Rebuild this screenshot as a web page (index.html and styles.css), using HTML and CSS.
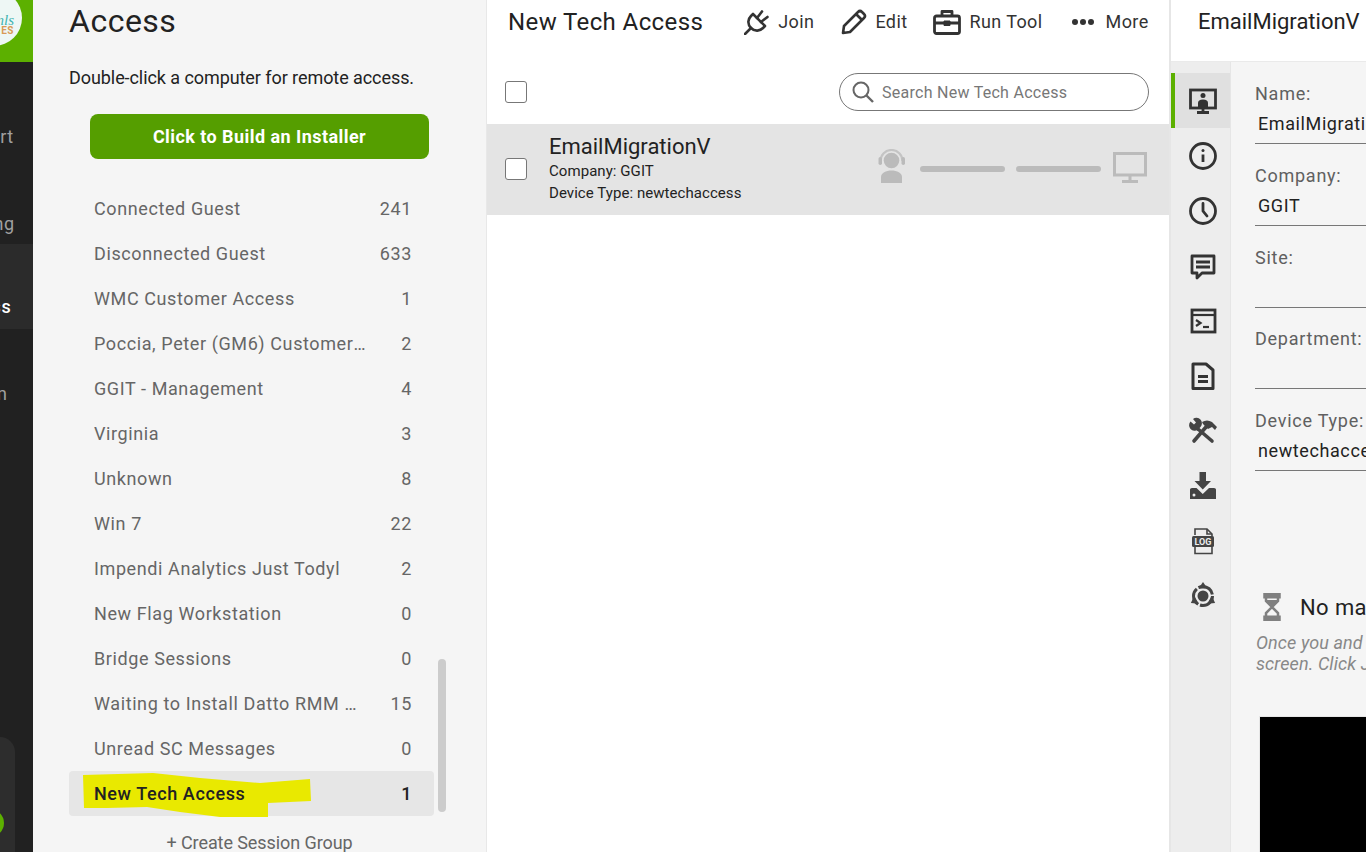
FILE: index.html
```html
<!DOCTYPE html>
<html lang="en">
<head>
<meta charset="utf-8">
<title>New Tech Access</title>
<link rel="stylesheet" href="styles.css">
</head>
<body>
<div class="app">
  <nav class="rail">
    <div class="logo"><div class="logo-disc"><span class="logo-a">nls</span><span class="logo-b">ES</span></div></div>
    <div class="rail-nav">
      <div class="rail-item"><span>Support</span></div>
      <div class="rail-item"><span>Meeting</span></div>
      <div class="rail-item active"><span>Access</span></div>
      <div class="rail-item"><span>Admin</span></div>
    </div>
    <div class="rail-pill"><span class="rail-dot"></span></div>
  </nav>

  <aside class="groups">
    <h1 class="groups-title">Access</h1>
    <p class="groups-intro">Double-click a computer for remote access.</p>
    <button class="build-btn">Click to Build an Installer</button>
    <ul class="group-list">
      <li class="group-row"><span class="group-name">Connected Guest</span><span class="group-count">241</span></li>
      <li class="group-row"><span class="group-name">Disconnected Guest</span><span class="group-count">633</span></li>
      <li class="group-row"><span class="group-name">WMC Customer Access</span><span class="group-count">1</span></li>
      <li class="group-row"><span class="group-name">Poccia, Peter (GM6) Customer Access</span><span class="group-count">2</span></li>
      <li class="group-row"><span class="group-name">GGIT - Management</span><span class="group-count">4</span></li>
      <li class="group-row"><span class="group-name">Virginia</span><span class="group-count">3</span></li>
      <li class="group-row"><span class="group-name">Unknown</span><span class="group-count">8</span></li>
      <li class="group-row"><span class="group-name">Win 7</span><span class="group-count">22</span></li>
      <li class="group-row"><span class="group-name">Impendi Analytics Just Todyl</span><span class="group-count">2</span></li>
      <li class="group-row"><span class="group-name">New Flag Workstation</span><span class="group-count">0</span></li>
      <li class="group-row"><span class="group-name">Bridge Sessions</span><span class="group-count">0</span></li>
      <li class="group-row"><span class="group-name">Waiting to Install Datto RMM Agent</span><span class="group-count">15</span></li>
      <li class="group-row"><span class="group-name">Unread SC Messages</span><span class="group-count">0</span></li>
      <li class="group-row selected">
        <svg class="marker" viewBox="0 0 228 46" width="228" height="46"><polygon fill="#e9e900" points="0,4 70,2 117,7 177,12 227,8 228,30 185,32 185,46 137,46 97,41 64,36 24,37 1,37"/></svg>
        <span class="group-name">New Tech Access</span><span class="group-count">1</span>
      </li>
    </ul>
    <div class="create-group">+ Create Session Group</div>
    <div class="scrollbar"></div>
  </aside>

  <main class="sessions">
    <header class="sessions-head">
      <h2 class="sessions-title">New Tech Access</h2>
      <div class="actions">
        <div class="action action-join">
          <svg width="26" height="26" viewBox="0 0 26 26" fill="none" stroke="#333" stroke-width="2.600" stroke-linecap="round" stroke-linejoin="round"><path d="M7 19C3 15 4 10 7 7L9 5L21 17L19 19C16 22 11 23 7 19Z"/><path d="M13 9L18 2.500M17 13L23.500 8M7 19L1 25"/></svg>
          <span>Join</span>
        </div>
        <div class="action action-edit">
          <svg width="26" height="26" viewBox="0 0 26 26" fill="none" stroke="#333" stroke-width="2.600" stroke-linejoin="round"><path d="M2 24L3 17L17 3Q19 1 21 3L23 5Q25 7 23 9L9 23Z"/><path d="M15 5L21 11"/></svg>
          <span>Edit</span>
        </div>
        <div class="action action-tool">
          <svg width="28" height="26" viewBox="0 0 28 26" fill="none" stroke="#333" stroke-width="2.800" stroke-linejoin="round"><rect x="1.500" y="7" width="25" height="17.500" rx="2"/><path d="M9 7V2.500H19V7M1.500 14H11M17 14H26.500"/><rect x="11" y="12" width="6" height="4.500" fill="#333" stroke-width="1"/></svg>
          <span>Run Tool</span>
        </div>
        <div class="action action-more">
          <svg width="24" height="8" viewBox="0 0 24 8" fill="#333"><circle cx="4" cy="4" r="3"/><circle cx="12" cy="4" r="3"/><circle cx="20" cy="4" r="3"/></svg>
          <span>More</span>
        </div>
      </div>
    </header>
    <div class="toolbar">
      <span class="checkbox"></span>
      <div class="search">
        <svg width="24" height="24" viewBox="0 0 24 24" fill="none" stroke="#666" stroke-width="2"><circle cx="10" cy="10" r="7.500"/><path d="M15.500 15.500L22 22" stroke-width="2.400"/></svg>
        <span>Search New Tech Access</span>
      </div>
    </div>
    <div class="session-row">
      <span class="checkbox"></span>
      <div class="session-info">
        <div class="session-name">EmailMigrationV</div>
        <div class="session-meta">Company: GGIT</div>
        <div class="session-meta">Device Type: newtechaccess</div>
      </div>
      <div class="session-status">
        <svg class="status-agent" width="28" height="34" viewBox="0 0 28 34" fill="#bbb"><circle cx="13.500" cy="11.500" r="7.800"/><path d="M2.500 12a11 11 0 0 1 22 0" fill="none" stroke="#c4c4c4" stroke-width="2.200"/><rect x="0.500" y="8" width="3.500" height="8" rx="1.750"/><rect x="23.500" y="8" width="3.500" height="8" rx="1.750"/><path d="M3 34V28C3 24 8 21.500 13.500 21.500S24 24 24 28V34Z"/></svg>
        <span class="status-bar"></span>
        <span class="status-bar"></span>
        <svg class="status-monitor" width="34" height="31" viewBox="0 0 34 31" fill="none" stroke="#bbb" stroke-width="3"><rect x="1.500" y="1.500" width="31" height="21.500"/><path d="M17 23V29" stroke-width="3"/><path d="M9 29.500H25" stroke-width="3"/></svg>
      </div>
    </div>
  </main>

  <section class="details">
    <header class="details-head">EmailMigrationV</header>
    <div class="details-body">
      <div class="tabs">
        <div class="tab active"><svg width="30" height="30" viewBox="0 0 30 30" fill="none" stroke="#333" stroke-width="2.800"><rect x="2.500" y="4" width="25" height="18"/><path d="M15 22V26M9 26.500H21"/><circle cx="15" cy="9.500" r="2.500" fill="#333" stroke="none"/><path d="M10 21V17Q10 13.500 15 13.500T20 17V21Z" fill="#333" stroke="none"/></svg></div>
        <div class="tab"><svg width="30" height="30" viewBox="0 0 30 30" fill="none" stroke="#333" stroke-width="2.800"><circle cx="15" cy="15" r="12.500"/><path d="M15 13.500V21"/><circle cx="15" cy="9.500" r="1.500" fill="#333" stroke="none"/></svg></div>
        <div class="tab"><svg width="30" height="30" viewBox="0 0 30 30" fill="none" stroke="#333" stroke-width="2.800"><circle cx="15" cy="15" r="12.500"/><path d="M15 7.500V15L19 20" stroke-linecap="round"/></svg></div>
        <div class="tab"><svg width="30" height="30" viewBox="0 0 30 30" fill="none" stroke="#333" stroke-width="2.800"><path d="M4 5H26V22H14L9 27V22H4Z" stroke-linejoin="round"/><path d="M8 11H22M8 16H22"/></svg></div>
        <div class="tab"><svg width="30" height="30" viewBox="0 0 30 30" fill="none" stroke="#333" stroke-width="2.800"><rect x="4" y="4" width="23" height="22"/><path d="M4 9H27" stroke-width="2.200"/><path d="M8 14L12.500 17L8 20" stroke-width="2.200"/><path d="M15 21H21" stroke-width="2.200"/></svg></div>
        <div class="tab"><svg width="30" height="30" viewBox="0 0 30 30" fill="none" stroke="#333" stroke-width="3" stroke-linejoin="round"><path d="M5 3H18L25 9V27.500H5Z"/><path d="M10 15.500H20M10 20.500H20"/></svg></div>
        <div class="tab"><svg width="30" height="30" viewBox="0 0 30 30" fill="#444" stroke="#444"><path d="M6 25L18 11" stroke-width="3.600" stroke-linecap="round"/><path d="M14 6Q19 3 24 6L29 11L27 14L24 11L20 13L15 8Z" stroke="none"/><path d="M10 13L24 25" stroke-width="3.600" stroke-linecap="round"/><path d="M5 3L8 6.500L6 8.500L2.500 5.500A5.500 5.500 0 0 0 10 13.500L12.500 11A5.500 5.500 0 0 0 5 3Z" stroke="none"/></svg></div>
        <div class="tab"><svg width="30" height="30" viewBox="0 0 30 30" fill="#444"><path d="M11.500 1H18V10H23L14.750 18.500L6.500 10H11.500Z"/><path d="M2 18.500Q2 17 4 17H8.500L14.750 23L21 17H26Q28 17 28 18.500V28H2Z"/><circle cx="6" cy="24" r="1.500" fill="#eee"/></svg></div>
        <div class="tab"><svg width="30" height="30" viewBox="0 0 30 30" fill="none" stroke="#444" stroke-width="1.600"><path d="M7 9V3H19L24 8V10M7 21V27.500H24V21"/><path d="M19 3V8H24"/><rect x="4" y="10" width="22" height="11" rx="1.500" fill="#444" stroke="none"/><text class="log-text" x="15" y="19" text-anchor="middle">LOG</text></svg></div>
        <div class="tab"><svg width="30" height="30" viewBox="0 0 30 30" fill="none" stroke="#444" stroke-width="3"><circle cx="15" cy="15" r="5.500" fill="#444" stroke="none"/><circle cx="15" cy="15" r="9.500" stroke-dasharray="17.900 2"/><polygon points="15,1 19.500,7.500 10.500,7.500" fill="#444" stroke="none"/><polygon points="15,1 19.500,7.500 10.500,7.500" fill="#444" stroke="none" transform="rotate(120 15 15)"/><polygon points="15,1 19.500,7.500 10.500,7.500" fill="#444" stroke="none" transform="rotate(240 15 15)"/></svg></div>
      </div>
      <div class="info">
        <div class="field"><div class="field-label">Name:</div><div class="field-value">EmailMigrationV</div></div>
        <div class="field"><div class="field-label">Company:</div><div class="field-value">GGIT</div></div>
        <div class="field"><div class="field-label">Site:</div><div class="field-value"></div></div>
        <div class="field"><div class="field-label">Department:</div><div class="field-value"></div></div>
        <div class="field"><div class="field-label">Device Type:</div><div class="field-value">newtechaccess</div></div>
        <div class="no-machine">
          <svg width="18" height="28" viewBox="0 0 18 28" fill="none" stroke="#808080" stroke-width="2.500"><rect x="1.500" y="1.250" width="15" height="3" fill="#808080"/><rect x="1.500" y="23.750" width="15" height="3" fill="#808080"/><path d="M3 4V8L9 14L15 8V4M3 24V20L9 14L15 20V24"/><path d="M4 7H14V8L9 13L4 8Z" fill="#808080" stroke="none"/></svg>
          <span>No machine</span>
        </div>
        <p class="hint">Once you and the<br>screen. Click Join</p>
        <div class="thumb"></div>
      </div>
    </div>
  </section>
</div>
</body>
</html>
```
FILE: styles.css
```css
* { box-sizing: border-box; }
html, body { margin: 0; height: 852px; overflow: hidden; }
body { font-family: Roboto, "Liberation Sans", sans-serif; color: #222; background: #f5f5f5; }
.app { display: grid; grid-template-columns: 33px 454px 682px 197px; width: 1366px; height: 852px; overflow: hidden; }

/* left rail */
.rail { background: #212121; display: flex; flex-direction: column; height: 852px; overflow: hidden; }
.logo { height: 62px; background: #5cb000; flex: none; display: flex; justify-content: flex-end; overflow: hidden; }
.logo-disc { flex: none; width: 56px; height: 56px; margin: -10px 11px 0 0; border-radius: 50%; background: #eef7f5; display: flex; flex-direction: column; align-items: flex-end; padding: 24px 8px 0 0; }
.logo-a { color: #3fb3b0; font-family: "Liberation Serif", serif; font-style: italic; font-size: 15px; line-height: 12px; }
.logo-b { color: #d99a55; font-weight: 700; font-size: 10px; line-height: 10px; letter-spacing: .5px; }
.rail-nav { margin-top: 12px; flex: none; }
.rail-item { height: 85px; margin-left: -73px; width: 106px; display: flex; justify-content: center; align-items: flex-end; padding: 0 0 12px; color: #a0a0a0; font-size: 18px; letter-spacing: .6px; line-height: 20px; white-space: nowrap; }
.rail-item:nth-child(even) { padding-bottom: 10px; }
.rail-item span { flex: none; }
.rail-item.active { background: #2b2b2b; color: #fff; font-weight: 500; }
.rail-pill { margin-top: auto; flex: none; width: 15px; height: 115px; background: #2d2d2d; border-radius: 0 18px 0 0; display: flex; align-items: flex-end; padding-bottom: 15px; overflow: hidden; }
.rail-dot { flex: none; width: 28px; height: 28px; margin-left: -24px; border-radius: 50%; background: #5cb000; }

/* groups panel */
.groups { position: relative; background: #f5f5f5; border-right: 1px solid #e8e8e8; padding-left: 36px; height: 852px; overflow: hidden; }
.groups-title { margin: 0; font-size: 32px; font-weight: 400; line-height: 42px; letter-spacing: .5px; }
.groups-intro { margin: 24px 0 0; font-size: 18px; line-height: 24px; letter-spacing: -.07px; }
.build-btn { display: block; margin: 24px 0 0 21px; width: 339px; height: 45px; border: 0; border-radius: 8px; background: #559e00; color: #fff; font: 700 18px Roboto, sans-serif; letter-spacing: .44px; }
.group-list { list-style: none; margin: 27px 0 0; padding: 0; width: 365px; }
.group-row { position: relative; height: 45px; display: flex; align-items: center; justify-content: space-between; padding: 0 22px 0 25px; font-size: 18px; letter-spacing: .6px; color: #666; }
.group-name { position: relative; max-width: 272px; overflow: hidden; text-overflow: ellipsis; white-space: nowrap; }
.group-count { position: relative; }
.group-row.selected { background: #e6e6e6; border-radius: 4px; color: #222; font-weight: 500; }
.marker { position: absolute; left: 14px; top: 0; }
.create-group { margin: 15px 0 0 21px; width: 339px; text-align: center; font-size: 18px; letter-spacing: -.08px; line-height: 24px; color: #666; }
.scrollbar { position: absolute; left: 405px; top: 659px; width: 8px; height: 153px; border-radius: 4px; background: #ccc; }

/* sessions */
.sessions { background: #fff; height: 852px; overflow: hidden; }
.sessions-head { height: 44px; display: flex; align-items: center; padding-left: 21px; }
.sessions-title { margin: 0; font-size: 24px; font-weight: 400; white-space: nowrap; letter-spacing: .4px; }
.actions { display: flex; align-items: center; font-size: 18px; letter-spacing: .4px; color: #333; margin: -1px 0 0 41px; }
.action { display: flex; align-items: center; }
.action svg { flex: none; }
.action-join span { margin-left: 8px; }
.action-edit { margin-left: 27px; }
.action-edit span { margin-left: 8px; }
.action-tool { margin-left: 25px; }
.action-tool span { margin-left: 9px; }
.action-more { margin-left: 28px; }
.action-more span { margin-left: 11px; }
.toolbar { height: 80px; display: flex; align-items: center; justify-content: space-between; padding: 16px 20px 0 18px; }
.checkbox { flex: none; display: block; width: 22px; height: 22px; background: #fff; border: 1px solid #777; border-radius: 3px; }
.search { width: 310px; height: 38px; border: 1px solid #777; border-radius: 19px; display: flex; align-items: center; gap: 7px; padding-left: 11px; font-size: 16px; letter-spacing: .27px; color: #777; }
.session-row { height: 91px; background: #e4e4e4; display: flex; align-items: center; padding: 0 22px 0 18px; }
.session-row .checkbox { margin-top: -1px; }
.session-info { margin: -2px 0 0 22px; display: flex; flex-direction: column; }
.session-name { font-size: 22px; line-height: 26px; }
.session-meta { font-size: 15px; letter-spacing: .06px; line-height: 22px; }
.session-status { margin: -1px 0 0 auto; display: flex; align-items: center; gap: 11px; }
.status-bar { display: block; width: 85px; height: 6px; border-radius: 3px; background: #bbb; }
.status-agent { margin: 0 3px 6px 0; }
.status-monitor { margin: 0 0 4px 1px; }

/* details */
.details { height: 852px; overflow: hidden; border-left: 2px solid #e6e6e6; background: #f5f5f5; }
.details-head { height: 62px; background: #fff; border-bottom: 1px solid #eaeaea; font-size: 22px; line-height: 44px; padding-left: 27px; white-space: nowrap; }
.details-body { display: flex; height: 790px; }
.tabs { flex: none; width: 60px; background: #ededed; border-right: 1px solid #e6e6e6; padding-top: 11px; }
.tab { height: 55px; display: flex; align-items: center; justify-content: center; border-left: 4px solid transparent; }
.tab.active { background: #e0e0e0; border-left-color: #5cb000; }
.log-text { fill: #eee; stroke: none; font: 700 9px Roboto, sans-serif; }
.info { flex: 1; min-width: 0; padding: 19px 0 0 24px; overflow: hidden; }
.field { height: 63px; margin-bottom: 18.75px; border-bottom: 1px solid #777; display: flex; flex-direction: column; white-space: nowrap; }
.field-label { font-size: 18px; line-height: 26px; color: #606060; letter-spacing: .75px; }
.field-value { font-size: 18px; line-height: 26px; margin: 4px 0 0 3px; color: #222; letter-spacing: .6px; }
.no-machine { display: flex; align-items: center; margin: 122px 0 0 8px; font-size: 22px; letter-spacing: .4px; white-space: nowrap; }
.no-machine svg { flex: none; }
.no-machine span { margin-left: 19px; }
.hint { margin: 11px 0 0 1px; font-size: 18px; letter-spacing: .1px; line-height: 21px; font-style: italic; color: #888; white-space: nowrap; }
.thumb { margin: 43px 0 0 5px; width: 200px; height: 200px; background: #000; outline: 1px solid #e6e6e6; }
```
